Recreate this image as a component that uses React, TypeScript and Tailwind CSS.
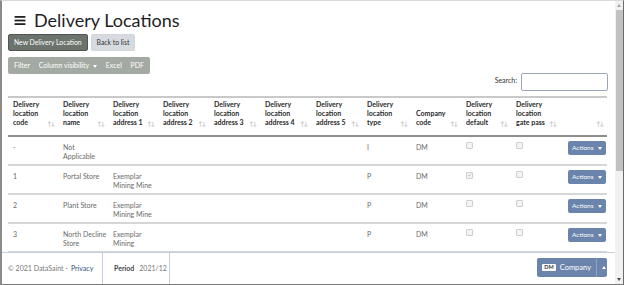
import React from 'react'

// --- Data ---
const headers: string[][] = [
  ['Delivery', 'location', 'code'],
  ['Delivery', 'location', 'name'],
  ['Delivery', 'location', 'address 1'],
  ['Delivery', 'location', 'address 2'],
  ['Delivery', 'location', 'address 3'],
  ['Delivery', 'location', 'address 4'],
  ['Delivery', 'location', 'address 5'],
  ['Delivery', 'location', 'type'],
  ['Company', 'code'],
  ['Delivery', 'location', 'default'],
  ['Delivery', 'location', 'gate pass'],
  [],
]

const colWidths = ['w-[50px]', 'w-[50px]', 'w-[50px]', 'w-[51px]', 'w-[51px]', 'w-[51px]', 'w-[51px]', 'w-[49px]', 'w-[50px]', 'w-[50px]', 'w-[49px]', 'w-[47px]']

interface Row {
  code: string
  name: string[]
  addr1: string[]
  type: string
  company: string
  isDefault: boolean
}

const rows: Row[] = [
  { code: '-', name: ['Not', 'Applicable'], addr1: [], type: 'I', company: 'DM', isDefault: false },
  { code: '1', name: ['Portal Store'], addr1: ['Exemplar', 'Mining Mine'], type: 'P', company: 'DM', isDefault: true },
  { code: '2', name: ['Plant Store'], addr1: ['Exemplar', 'Mining Mine'], type: 'P', company: 'DM', isDefault: false },
  { code: '3', name: ['North Decline', 'Store'], addr1: ['Exemplar', 'Mining'], type: 'P', company: 'DM', isDefault: false },
]

const SortIcon = () => (
  <span className="absolute bottom-[8px] right-[4px] text-[6px] leading-none tracking-[-1px] text-[#c4c4c4]">↑↓</span>
)

const Caret = ({ up = false }: { up?: boolean }) => (
  <span
    className={
      up
        ? 'ml-[3px] inline-block h-0 w-0 border-x-[2.5px] border-b-[3px] border-x-transparent border-b-white align-middle'
        : 'ml-[4px] inline-block h-0 w-0 border-x-[2.5px] border-t-[3px] border-x-transparent border-t-white align-middle'
    }
  />
)

const Checkbox = ({ checked }: { checked: boolean }) => (
  <span className="inline-flex h-[7px] w-[7px] items-center justify-center rounded-[1px] border border-[#cfcfcf] bg-[#f4f4f4]">
    {checked && (
      <svg viewBox="0 0 8 8" className="h-[6px] w-[6px]">
        <path d="M1.5 4.2 L3.3 6 L6.6 2" fill="none" stroke="#b8b8b8" strokeWidth="1.3" />
      </svg>
    )}
  </span>
)

const Lines = ({ lines }: { lines: string[] }) => (
  <>
    {lines.map((l, i) => (
      <span key={i} className="block whitespace-nowrap">
        {l}
      </span>
    ))}
  </>
)

const cell = 'px-[5px] pt-[6px] text-[#6a6a6a]'

export default function App() {
  return (
    <div className="flex h-[285px] w-[624px] overflow-hidden border-b border-l-2 border-r border-t border-b-[#7a7a7a] border-l-[#8a8a8a] border-r-[#6a6a6a] border-t-[#d9d9d9] bg-white [font-family:Lato,'Noto_Sans',sans-serif]">
      <div className="flex min-w-0 flex-1 flex-col">
        {/* main */}
        <main className="h-[251px] overflow-hidden pl-[6px] pr-[7px]">
          <h1 className="mt-[8px] flex items-center text-[18px] leading-[22px] text-[#1e1e1e]">
            <svg viewBox="0 0 12 10" className="ml-[6px] mr-[8px] h-[9px] w-[12px]">
              <rect x="0" y="0" width="12" height="2" fill="#222" />
              <rect x="0" y="4" width="12" height="2" fill="#222" />
              <rect x="0" y="8" width="12" height="2" fill="#222" />
            </svg>
            Delivery Locations
          </h1>

          <div className="mt-[3px] flex gap-[3px]">
            <button className="h-[17px] rounded-[2px] border border-[#4f5750] bg-[#6b736c] px-[5px] text-[6.8px] leading-none whitespace-nowrap text-white">
              New Delivery Location
            </button>
            <button className="h-[17px] rounded-[2px] border border-[#d2d6da] bg-[#d7dbdf] px-[5px] text-[6.8px] leading-none whitespace-nowrap text-[#333]">
              Back to list
            </button>
          </div>

          <div className="mt-[6px] flex h-[17px] w-[142px] items-center justify-between rounded-[2px] bg-[#a3a9a3] px-[6px] text-[7px] leading-none whitespace-nowrap text-white">
            <span>Filter</span>
            <span>
              Column visibility
              <Caret />
            </span>
            <span>Excel</span>
            <span>PDF</span>
          </div>

          <div className="-mt-[1px] flex items-center justify-end gap-[4px]">
            <label className="-mt-[3px] text-[7px] text-[#333]">Search:</label>
            <input className="h-[18px] w-[87px] rounded-[2px] border border-[#9aa7b8] bg-white" />
          </div>

          <table className="mt-[5px] w-[599px] table-fixed border-collapse border-t-2 border-t-[#c9c9c9] text-[7px] leading-[9px]">
            <colgroup>
              {colWidths.map((w, i) => (
                <col key={i} className={w} />
              ))}
            </colgroup>
            <thead>
              <tr className="border-b-2 border-b-[#8d8f8d]">
                {headers.map((h, i) => (
                  <th key={i} className="relative h-[36px] px-[5px] pt-[2px] pb-[8px] text-left align-bottom font-bold text-[#2a2a2a]">
                    <Lines lines={h} />
                    <SortIcon />
                  </th>
                ))}
              </tr>
            </thead>
            <tbody>
              {rows.map((r, i) => (
                <tr key={i} className="h-[29px] border-b-2 border-b-[#d6d6d6] align-top">
                  <td className={cell}>{r.code}</td>
                  <td className={cell}>
                    <Lines lines={r.name} />
                  </td>
                  <td className={cell}>
                    <Lines lines={r.addr1} />
                  </td>
                  <td />
                  <td />
                  <td />
                  <td />
                  <td className={cell}>{r.type}</td>
                  <td className={cell}>{r.company}</td>
                  <td className="px-[5px] pt-[5px]">
                    <Checkbox checked={r.isDefault} />
                  </td>
                  <td className="px-[5px] pt-[5px]">
                    <Checkbox checked={false} />
                  </td>
                  <td className="pt-[4px] pl-[8px]">
                    <button className="flex h-[14px] items-center rounded-[2px] bg-[#6b84ab] px-[4px] text-[6.5px] leading-none whitespace-nowrap text-white">
                      Actions
                      <Caret />
                    </button>
                  </td>
                </tr>
              ))}
            </tbody>
          </table>
        </main>

        {/* footer */}
        <footer className="flex h-[32px] items-stretch border-t border-t-[#c5d0de] pr-[8px] text-[7px] whitespace-nowrap text-[#777]">
          <div className="flex w-[101px] items-center border-r border-r-[#c5d0de] pl-[6px]">
            <span>© 2021 DataSaint -</span>
            <span className="ml-[3px] text-[#2f4f7a]">Privacy</span>
          </div>
          <div className="flex w-[67px] items-center gap-[5px] border-r border-r-[#c5d0de] pl-[11px]">
            <span className="font-bold text-[#444]">Period</span>
            <span>2021/12</span>
          </div>
          <div className="flex flex-1 items-center justify-end">
            <div className="-mt-[2px] flex h-[19px] overflow-hidden rounded-[2px] bg-[#6b84ab] text-[7.5px] text-white">
              <span className="flex items-center gap-[4px] pl-[5px] pr-[5px]">
                <span className="rounded-[1px] bg-white px-[2px] text-[5.5px] font-bold leading-[7px] text-[#333]">DM</span>
                <span>Company</span>
              </span>
              <span className="flex w-[11px] items-center justify-center border-l border-l-[#8fa2c2]">
                <Caret up />
              </span>
            </div>
          </div>
        </footer>
      </div>

      {/* scrollbar */}
      <div className="flex w-[8px] flex-col items-center bg-[#f1f1f1] pt-[3px]">
        <span className="h-0 w-0 border-x-[2.5px] border-b-[3px] border-x-transparent border-b-[#a3a3a3]" />
        <div className="mt-[3px] h-[161px] w-[7px] bg-[#c1c1c1]" />
        <div className="flex-1" />
        <span className="mb-[3px] h-0 w-0 border-x-[2.5px] border-t-[3px] border-x-transparent border-t-[#505050]" />
      </div>
    </div>
  )
}
